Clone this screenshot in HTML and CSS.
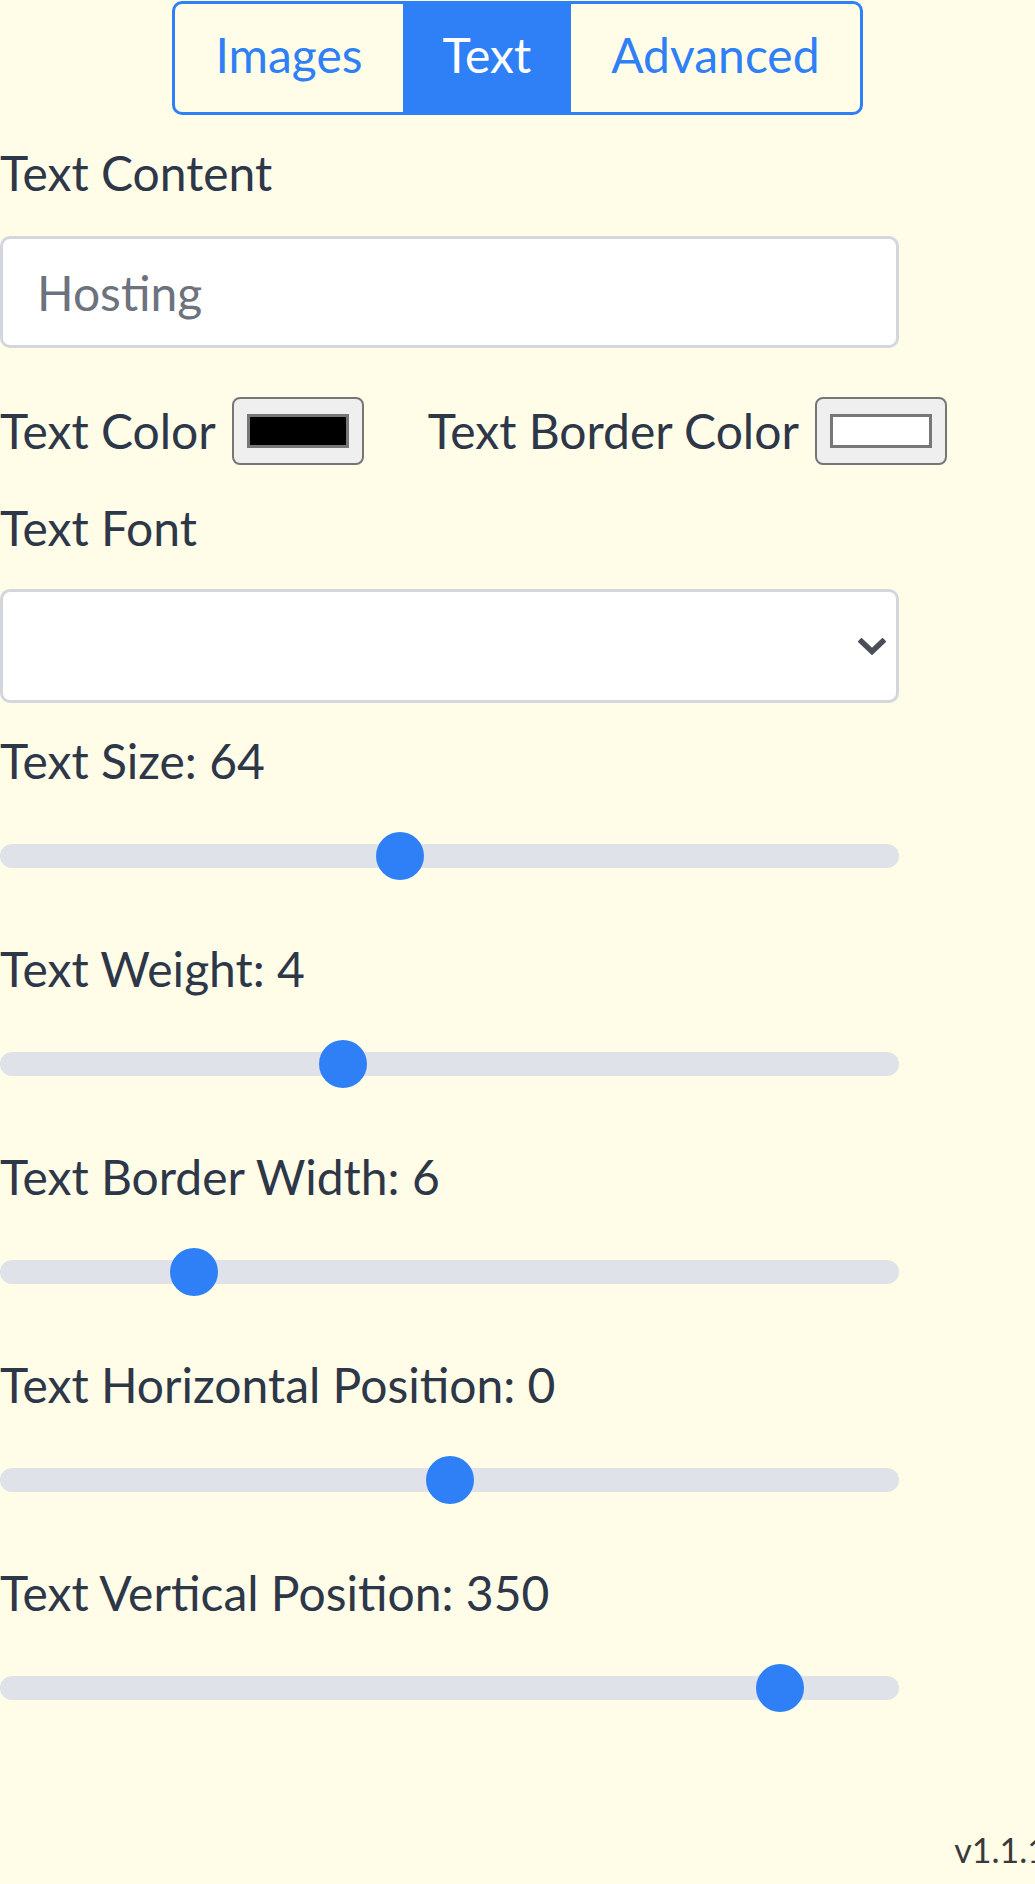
FILE: index.html
```html
<!DOCTYPE html>
<html lang="en">
<head>
<meta charset="utf-8">
<title>Text settings</title>
<link rel="stylesheet" href="styles.css">
</head>
<body>
<main class="panel">
  <nav class="tabs">
    <button class="tab" type="button">Images</button>
    <button class="tab active" type="button">Text</button>
    <button class="tab" type="button">Advanced</button>
  </nav>

  <label class="label label-first" for="content">Text Content</label>
  <input id="content" class="field" type="text" placeholder="Hosting">

  <div class="color-row">
    <span class="label-inline">Text Color</span>
    <span class="swatch"><span class="swatch-fill fill-black"></span></span>
    <span class="label-inline label-second">Text Border Color</span>
    <span class="swatch"><span class="swatch-fill fill-white"></span></span>
  </div>

  <label class="label label-font" for="font">Text Font</label>
  <div class="select-wrap">
    <select id="font" class="field select"></select>
    <svg class="chevron" viewBox="0 0 28 17" aria-hidden="true">
      <polyline points="3.5,3.5 14,13.5 24.5,3.5" fill="none" stroke="#4a4f57" stroke-width="5.5" stroke-linecap="square" stroke-linejoin="miter"/>
    </svg>
  </div>

  <div class="slider-group slider-first">
    <label class="label" for="size">Text Size: 64</label>
    <input id="size" class="range" type="range" min="0" max="145" value="64">
  </div>
  <div class="slider-group">
    <label class="label" for="weight">Text Weight: 4</label>
    <input id="weight" class="range" type="range" min="1" max="9" value="4">
  </div>
  <div class="slider-group">
    <label class="label" for="bwidth">Text Border Width: 6</label>
    <input id="bwidth" class="range" type="range" min="0" max="30" value="6">
  </div>
  <div class="slider-group">
    <label class="label" for="hpos">Text Horizontal Position: 0</label>
    <input id="hpos" class="range" type="range" min="-500" max="500" value="0">
  </div>
  <div class="slider-group">
    <label class="label" for="vpos">Text Vertical Position: 350</label>
    <input id="vpos" class="range" type="range" min="0" max="394" value="350">
  </div>
</main>
<footer class="version"><span class="version-text">v1.1.1</span></footer>
</body>
</html>
```

FILE: styles.css
```css
* {
  box-sizing: border-box;
}

html,
body {
  margin: 0;
  padding: 0;
}

body {
  width: 1035px;
  min-height: 1884px;
  overflow-x: hidden;
  background: #fffde8;
  font-family: Lato, "Noto Sans", sans-serif;
  font-size: 48px;
  line-height: 58px;
  color: #2d3748;
}

.tabs {
  display: flex;
  width: max-content;
  margin: 1px auto 0;
  border: 3px solid #2f80f7;
  border-radius: 10px;
  overflow: hidden;
}

.tab {
  margin: 0;
  padding: 22px 40px 28px;
  border: 0;
  background: transparent;
  font: inherit;
  line-height: 58px;
  color: #2f80f7;
  cursor: pointer;
}

.tab.active {
  background: #2f80f7;
  color: #ffffff;
}

.label {
  display: block;
}

.label-first {
  margin-top: 29px;
}

.field {
  display: block;
  width: 899px;
  height: 112px;
  margin: 34px 0 0;
  padding: 0 34px;
  border: 3px solid #d3d7dd;
  border-radius: 10px;
  background: #ffffff;
  font: inherit;
  color: #2d3748;
  outline: none;
}

.field::placeholder {
  color: #6c737d;
}

.color-row {
  display: flex;
  align-items: center;
  height: 68px;
  margin-top: 49px;
}

.label-second {
  margin-left: 64px;
}

.swatch {
  display: flex;
  align-items: center;
  justify-content: center;
  width: 132px;
  height: 68px;
  margin-left: 16px;
  border: 2px solid #767676;
  border-radius: 8px;
  background: #efefef;
}

.swatch-fill {
  width: 102px;
  height: 34px;
  border: 3px solid #777777;
}

.fill-black {
  background: #000000;
}

.fill-white {
  background: #ffffff;
}

.label-font {
  margin-top: 34px;
}

.select-wrap {
  position: relative;
  width: 899px;
  margin-top: 32px;
}

.select {
  height: 114px;
  margin-top: 0;
  -webkit-appearance: none;
  appearance: none;
}

.chevron {
  position: absolute;
  top: 49px;
  right: 13px;
  width: 28px;
  height: 17px;
  pointer-events: none;
}

.slider-group {
  margin-top: 72px;
}

.slider-group.slider-first {
  margin-top: 29px;
}

.range {
  -webkit-appearance: none;
  appearance: none;
  display: block;
  width: 899px;
  height: 24px;
  margin: 54px 0 0;
  padding: 0;
  border-radius: 12px;
  background: #dfe2e8;
  outline: none;
}

.range::-webkit-slider-thumb {
  -webkit-appearance: none;
  appearance: none;
  width: 48px;
  height: 48px;
  border: 0;
  border-radius: 50%;
  background: #2f80f7;
}

.version {
  display: flex;
  justify-content: flex-end;
  margin-top: 129px;
  font-size: 34px;
  line-height: 41px;
  color: #3a3a3a;
}

.version-text {
  margin-right: -12px;
  white-space: nowrap;
}
```
